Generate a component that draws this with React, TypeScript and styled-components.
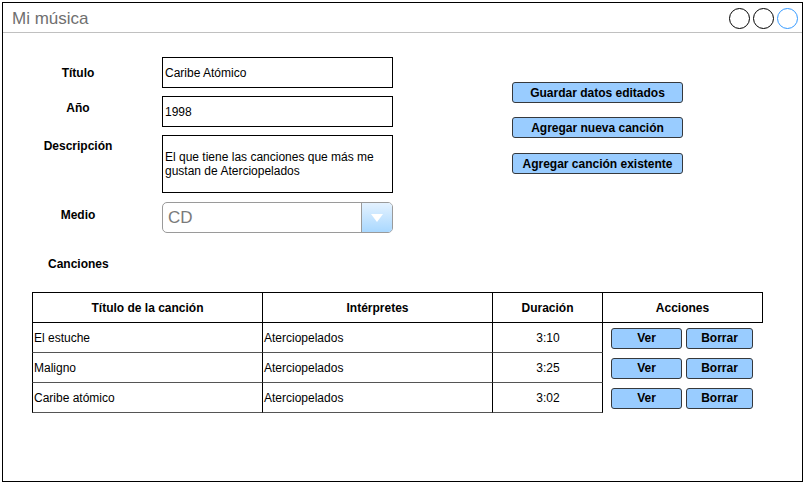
import styled, { createGlobalStyle } from "styled-components";

// colors
const black = "#000000";
const white = "#ffffff";
const buttonBlue = "#99ccff";
const buttonBorder = "#36393d";
const rowLine = "#555555";
const titleGray = "#6f6f6f";

const songs = [
  { id: 1, title: "El estuche", artist: "Aterciopelados", length: "3:10" },
  { id: 2, title: "Maligno", artist: "Aterciopelados", length: "3:25" },
  { id: 3, title: "Caribe atómico", artist: "Aterciopelados", length: "3:02" },
];

const GlobalStyle = createGlobalStyle`
  html, body {
    margin: 0;
    padding: 0;
    background: ${white};
  }
  body {
    font-family: "Liberation Sans", Arial, sans-serif;
    font-size: 12px;
    color: ${black};
  }
`;

const App = () => {
  return (
    <>
      <GlobalStyle />
      <Window>
        <TitleBar>
          <WindowTitle>Mi música</WindowTitle>
          <Controls>
            <Circle />
            <Circle />
            <Circle $active />
          </Controls>
        </TitleBar>

        <Content>
          <Top>
            <Form>
              <Label $offset={9}>Título</Label>
              <TextBox>Caribe Atómico</TextBox>

              <Label $offset={5}>Año</Label>
              <TextBox>1998</TextBox>

              <Label $offset={4}>Descripción</Label>
              <TextBox $tall>
                El que tiene las canciones que más me
                <br />
                gustan de Aterciopelados
              </TextBox>

              <Label $offset={7}>Medio</Label>
              <Select>
                <SelectValue>CD</SelectValue>
                <SelectArrow>
                  <svg width="14" height="10" viewBox="0 0 14 10">
                    <polygon points="1,1 13,1 7,9" fill={white} />
                  </svg>
                </SelectArrow>
              </Select>
            </Form>

            <Actions>
              <Button>Guardar datos editados</Button>
              <Button>Agregar nueva canción</Button>
              <Button $gap={1}>Agregar canción existente</Button>
            </Actions>
          </Top>

          <SectionTitle>Canciones</SectionTitle>

          <SongTable>
            <HeadCell $first>Título de la canción</HeadCell>
            <HeadCell>Intérpretes</HeadCell>
            <HeadCell>Duración</HeadCell>
            <HeadCell>Acciones</HeadCell>
            {songs.map((s) => (
              <Row key={s.id}>
                <Cell $first>{s.title}</Cell>
                <Cell>{s.artist}</Cell>
                <Cell $center>{s.length}</Cell>
                <ActionCell>
                  <SmallButton $width={71}>Ver</SmallButton>
                  <SmallButton $width={67}>Borrar</SmallButton>
                </ActionCell>
              </Row>
            ))}
          </SongTable>
        </Content>
      </Window>
    </>
  );
};

const Window = styled.div`
  box-sizing: border-box;
  margin: 2px 0 0 2px;
  width: 801px;
  height: 480px;
  border: 1px solid ${black};
  background: ${white};
  display: flex;
  flex-direction: column;
`;

const TitleBar = styled.div`
  height: 29px;
  border-bottom: 1px solid #c0c0c0;
  display: flex;
  align-items: center;
  justify-content: space-between;
  padding: 0 4px 0 9px;
`;

const WindowTitle = styled.div`
  font-size: 17px;
  color: ${titleGray};
  padding-top: 2px;
`;

const Controls = styled.div`
  display: flex;
  gap: 3px;
  padding-top: 2px;
`;

const Circle = styled.div<{ $active?: boolean }>`
  box-sizing: border-box;
  width: 21px;
  height: 21px;
  border-radius: 50%;
  border: 1px solid ${(p) => (p.$active ? "#3399ff" : black)};
`;

const Content = styled.div`
  padding: 24px 0 0 29px;
  display: flex;
  flex-direction: column;
`;

const Top = styled.div`
  display: flex;
  gap: 119px;
`;

const Form = styled.div`
  display: grid;
  grid-template-columns: 92px 231px;
  column-gap: 38px;
  row-gap: 8px;
`;

const Label = styled.div<{ $offset: number }>`
  font-weight: 700;
  text-align: center;
  line-height: 14px;
  padding-top: ${(p) => p.$offset}px;
`;

const TextBox = styled.div<{ $tall?: boolean }>`
  box-sizing: border-box;
  height: ${(p) => (p.$tall ? 58 : 31)}px;
  border: 1px solid ${black};
  padding: 0 2px;
  display: flex;
  align-items: center;
  line-height: 14px;
`;

const Select = styled.div`
  box-sizing: border-box;
  height: 31px;
  margin-top: 1px;
  border: 1px solid #9a9a9a;
  border-radius: 5px;
  display: flex;
  overflow: hidden;
`;

const SelectValue = styled.div`
  flex: 1;
  display: flex;
  align-items: center;
  padding-left: 5px;
  font-size: 17px;
  color: #7a7a7a;
`;

const SelectArrow = styled.div`
  width: 30px;
  border-left: 1px solid #9a9a9a;
  background: linear-gradient(to bottom, #e4f2ff, #a9d8ff);
  display: flex;
  align-items: center;
  justify-content: center;
`;

const Actions = styled.div`
  display: flex;
  flex-direction: column;
  gap: 14px;
  padding-top: 25px;
`;

const Button = styled.div<{ $gap?: number }>`
  box-sizing: border-box;
  width: 171px;
  height: 21px;
  margin-top: ${(p) => p.$gap ?? 0}px;
  background: ${buttonBlue};
  border: 1px solid ${buttonBorder};
  border-radius: 3px;
  font-weight: 700;
  display: flex;
  align-items: center;
  justify-content: center;
`;

const SectionTitle = styled.div`
  font-weight: 700;
  line-height: 14px;
  margin: 24px 0 0 16px;
`;

const SongTable = styled.div`
  margin-top: 21px;
  display: grid;
  grid-template-columns: 231px 230px 110px 160px;
`;

const HeadCell = styled.div<{ $first?: boolean }>`
  box-sizing: border-box;
  height: 31px;
  border-top: 1px solid ${black};
  border-bottom: 1px solid ${black};
  border-right: 1px solid ${black};
  border-left: ${(p) => (p.$first ? `1px solid ${black}` : "none")};
  font-weight: 700;
  display: flex;
  align-items: center;
  justify-content: center;
`;

const Row = styled.div`
  display: contents;
`;

const Cell = styled.div<{ $first?: boolean; $center?: boolean }>`
  box-sizing: border-box;
  height: 30px;
  border-bottom: 1px solid ${rowLine};
  border-right: 1px solid ${black};
  border-left: ${(p) => (p.$first ? `1px solid ${black}` : "none")};
  padding-left: 1px;
  display: flex;
  align-items: center;
  justify-content: ${(p) => (p.$center ? "center" : "flex-start")};
`;

const ActionCell = styled.div`
  height: 30px;
  display: flex;
  align-items: center;
  gap: 4px;
  padding-left: 8px;
`;

const SmallButton = styled.div<{ $width: number }>`
  box-sizing: border-box;
  width: ${(p) => p.$width}px;
  height: 21px;
  background: ${buttonBlue};
  border: 1px solid ${buttonBorder};
  border-radius: 3px;
  font-weight: 700;
  display: flex;
  align-items: center;
  justify-content: center;
`;

export default App;
